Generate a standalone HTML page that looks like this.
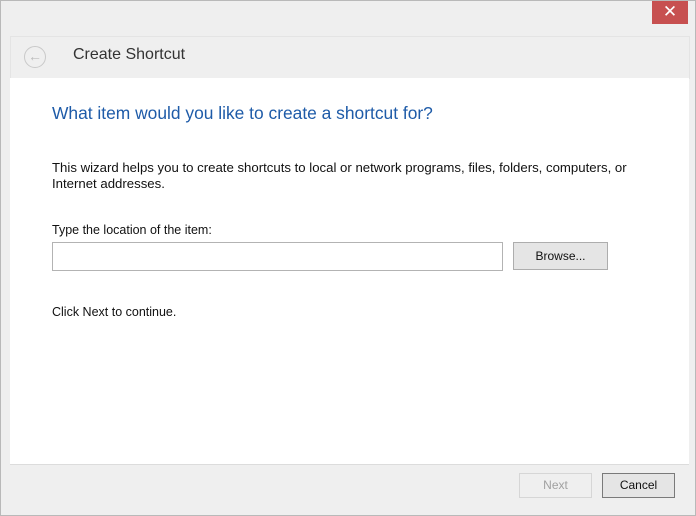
<!DOCTYPE html>
<html><head><style>
body{margin:0;width:696px;height:516px;background:#efefef;font-family:"Liberation Sans",sans-serif;position:relative;overflow:hidden}
.win{position:absolute;left:0;top:0;width:694px;height:514px;border:1px solid #b9b9b9;background:#efefef}
.close{position:absolute;left:651px;top:0;width:36px;height:23px;background:#c75050;color:#fff;text-align:center;font-size:17px;line-height:22px}
.hdr{position:absolute;left:9px;top:35px;width:678px;height:42px;border:1px solid #e4e4e4;border-bottom:none;background:#efefef}
.back{position:absolute;left:13px;top:9px;width:20px;height:20px;border:1px solid #c9c9c9;border-radius:50%;color:#bbb;font-size:14px;line-height:19px;text-align:center}
.title{position:absolute;left:62px;top:9px;font-size:16px;color:#333}
.content{position:absolute;left:9px;top:77px;width:679px;height:386px;background:#fff;border-bottom:1px solid #dcdcdc}
.q{position:absolute;left:42px;top:25px;font-size:17.4px;color:#1e5ba8}
.t{position:absolute;left:42px;font-size:12px;color:#111;line-height:16px}
.input{position:absolute;left:42px;top:164px;width:449px;height:27px;border:1px solid #b3b3b3;background:#fff}
.btn{position:absolute;border:1px solid #adadad;background:#e5e5e5;font-size:12px;color:#111;text-align:center;box-sizing:border-box}
</style></head><body>
<div class="win">
<div class="close">✕</div>
<div class="hdr"><div class="back">←</div><div class="title">Create Shortcut</div></div>
<div class="content">
<div class="q">What item would you like to create a shortcut for?</div>
<div class="t" style="top:82px;font-size:13.2px">This wizard helps you to create shortcuts to local or network programs, files, folders, computers, or<br>Internet addresses.</div>
<div class="t" style="top:144px;font-size:12.5px">Type the location of the item:</div>
<div class="input"></div>
<div class="btn" style="left:503px;top:164px;width:95px;height:28px;line-height:26px">Browse...</div>
<div class="t" style="top:226px;font-size:12.5px">Click Next to continue.</div>
</div>
<div class="btn" style="left:518px;top:472px;width:73px;height:25px;line-height:23px;color:#a0a0a0;border-color:#d6d6d6;background:#efefef">Next</div>
<div class="btn" style="left:601px;top:472px;width:73px;height:25px;line-height:23px;border-color:#7a7a7a">Cancel</div>
</div>
</body></html>
